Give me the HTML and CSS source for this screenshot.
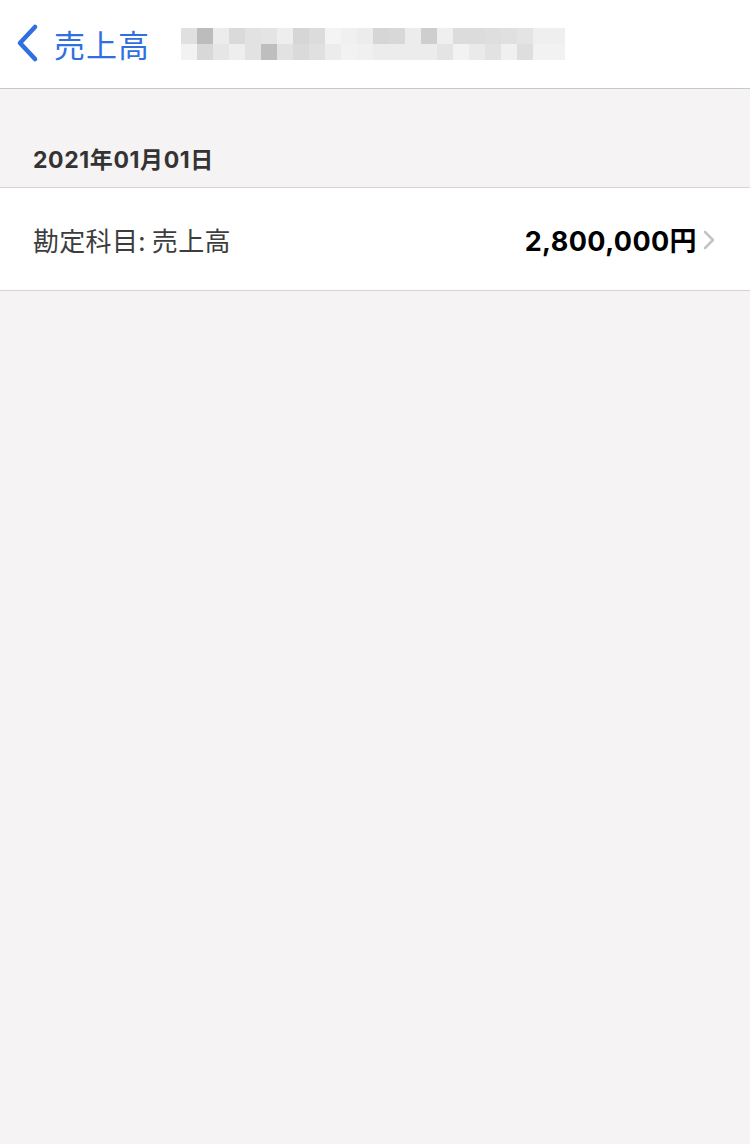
FILE: index.html
```html
<!DOCTYPE html>
<html lang="ja">
<head>
    <meta charset="UTF-8">
    <meta name="viewport" content="width=device-width, initial-scale=1.0">
    <title>売上高</title>
    <link rel="stylesheet" href="styles.css">
</head>
<body>
    <div class="nav-bar">
        <div class="back-button">
            <svg class="back-icon" width="26" height="40" viewBox="0 0 26 40">
                <polyline points="21,4 6,20 21,36" fill="none" stroke="#2f6fe2" stroke-width="4.6" stroke-linecap="round" stroke-linejoin="round"/>
            </svg>
            <span class="back-label">売上高</span>
        </div>
        <div class="mosaic" id="mosaic"></div>
    </div>

    <div class="section-header">2021年01月01日</div>
    <div class="list">
        <div class="list-row">
            <div class="row-label">勘定科目: 売上高</div>
            <div class="row-value">
                <span class="amount">2,800,000円</span>
                <svg class="chevron" width="14" height="20" viewBox="0 0 14 20">
                    <polyline points="3,2 11,10 3,18" fill="none" stroke="#c4c4c6" stroke-width="2.6" stroke-linecap="round" stroke-linejoin="round"/>
                </svg>
            </div>
        </div>
    </div>

    <script>
        // ぼかし部分のグレー (上段・下段)
        const shades = [
            ['e0e0e0','bcbcbc','ececec','dadada','e2e2e2','e4e4e4','eeeeee','d6d6d6','dcdcdc','f4f4f4','f0f0f0','ececec',
             'd6d6d6','d8d8d8','ececec','cecece','efefef','dcdcdc','dcdcdc','dedede','e0e0e0','e4e4e4','efefef','efefef'],
            ['f2f2f2','d8d8d8','e6e6e6','eeeeee','e2e2e2','bebebe','e2e2e2','dadada','e0e0e0','ececec','f2f2f2','f0f0f0',
             'ececec','ececec','ececec','ececec','e4e4e4','f2f2f2','eaeaea','e2e2e2','f0f0f0','dedede','f2f2f2','f2f2f2']
        ];
        const mosaic = document.getElementById('mosaic');
        shades.forEach(row => {
            row.forEach(c => {
                const cell = document.createElement('div');
                cell.className = 'mosaic-cell';
                cell.style.backgroundColor = '#' + c;
                mosaic.appendChild(cell);
            });
        });
    </script>
</body>
</html>
```

FILE: styles.css
```css
body {
    margin: 0;
    background-color: #f5f3f4;
    font-family: Inter, "Noto Sans CJK JP", sans-serif;
    color: #000;
}

.nav-bar {
    background-color: #fff;
    border-bottom: 1px solid #c8c7c9;
    display: flex;
    align-items: center;
    box-sizing: border-box;
    height: 89px;
}

.back-button {
    display: flex;
    align-items: center;
    padding-left: 14px;
    margin-top: -2px;
}

.back-icon {
    display: block;
}

.back-label {
    margin-left: 14px;
    font-size: 31px;
    color: #2f6fe2;
    font-family: "Noto Sans CJK JP", sans-serif;
    letter-spacing: 1px;
}

.mosaic {
    display: grid;
    grid-template-columns: repeat(24, 16px);
    grid-template-rows: 16px 16px;
    margin-left: 31px;
    margin-top: -1px;
}

.section-header {
    padding: 56px 0 0 33px;
    height: 42px;
    font-size: 23px;
    letter-spacing: 0.6px;
    font-weight: 700;
    color: #333;
    line-height: 30px;
    border-bottom: 1px solid #d3d2d4;
}

.list {
    background-color: #fff;
    border-bottom: 1px solid #d3d2d4;
}

.list-row {
    height: 102px;
    display: flex;
    align-items: center;
    justify-content: space-between;
    padding: 0 34px 0 33px;
}

.row-label {
    font-size: 26px;
    letter-spacing: 0.3px;
    color: #3d3d3d;
    font-family: "Noto Sans CJK JP", sans-serif;
}

.row-value {
    display: flex;
    align-items: center;
}

.amount {
    font-size: 27px;
    letter-spacing: 0.4px;
    font-weight: 700;
    color: #000;
}

.chevron {
    display: block;
    margin-left: 5px;
    margin-top: 2px;
}
```
